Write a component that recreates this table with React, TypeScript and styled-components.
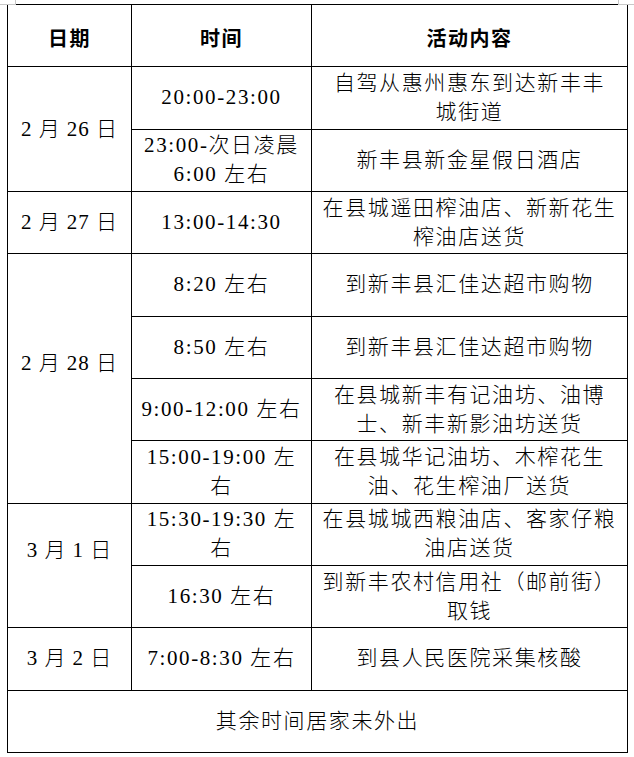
import styled, { createGlobalStyle } from "styled-components";

const GlobalStyle = createGlobalStyle`
  html, body {
    margin: 0;
    padding: 0;
    background: #ffffff;
  }
`;

interface Entry {
  time: string[];
  content: string[];
}

interface DayGroup {
  date: string;
  // the source doc leaves an empty paragraph under some dates, which pushes them up
  raised?: boolean;
  entries: Entry[];
}

const schedule: DayGroup[] = [
  {
    date: "2 月 26 日",
    entries: [
      { time: ["20:00-23:00"], content: ["自驾从惠州惠东到达新丰丰", "城街道"] },
      { time: ["23:00-次日凌晨", "6:00 左右"], content: ["新丰县新金星假日酒店"] },
    ],
  },
  {
    date: "2 月 27 日",
    entries: [
      { time: ["13:00-14:30"], content: ["在县城遥田榨油店、新新花生", "榨油店送货"] },
    ],
  },
  {
    date: "2 月 28 日",
    raised: true,
    entries: [
      { time: ["8:20 左右"], content: ["到新丰县汇佳达超市购物"] },
      { time: ["8:50 左右"], content: ["到新丰县汇佳达超市购物"] },
      { time: ["9:00-12:00 左右"], content: ["在县城新丰有记油坊、油博", "士、新丰新影油坊送货"] },
      { time: ["15:00-19:00 左", "右"], content: ["在县城华记油坊、木榨花生", "油、花生榨油厂送货"] },
    ],
  },
  {
    date: "3 月 1 日",
    raised: true,
    entries: [
      { time: ["15:30-19:30 左", "右"], content: ["在县城城西粮油店、客家仔粮", "油店送货"] },
      { time: ["16:30 左右"], content: ["到新丰农村信用社（邮前街）", "取钱"] },
    ],
  },
  {
    date: "3 月 2 日",
    entries: [{ time: ["7:00-8:30 左右"], content: ["到县人民医院采集核酸"] }],
  },
];

function Lines({ lines }: { lines: string[] }) {
  return (
    <>
      {lines.map((line, i) => (
        <Line key={i}>{line}</Line>
      ))}
    </>
  );
}

export default function App() {
  return (
    <>
      <GlobalStyle />
      <Page>
        <CornerMark $side="left" />
        <CornerMark $side="right" />
        <Table>
          <colgroup>
            <col style={{ width: 124 }} />
            <col style={{ width: 180 }} />
            <col style={{ width: 316 }} />
          </colgroup>
          <thead>
            <Row>
              <HeadCell>日期</HeadCell>
              <HeadCell>时间</HeadCell>
              <HeadCell>活动内容</HeadCell>
            </Row>
          </thead>
          <tbody>
            {schedule.map((group) =>
              group.entries.map((entry, index) => (
                <Row key={group.date + index}>
                  {index === 0 && (
                    <DateCell rowSpan={group.entries.length} $raised={group.raised}>
                      {group.date}
                    </DateCell>
                  )}
                  <Cell>
                    <Lines lines={entry.time} />
                  </Cell>
                  <Cell>
                    <Lines lines={entry.content} />
                  </Cell>
                </Row>
              ))
            )}
            <Row>
              <Cell colSpan={3}>其余时间居家未外出</Cell>
            </Row>
          </tbody>
        </Table>
      </Page>
    </>
  );
}

const Page = styled.div`
  position: relative;
  width: 634px;
  height: 757px;
  padding: 4px 0 0 7px;
  box-sizing: border-box;
`;

const CornerMark = styled.div<{ $side: "left" | "right" }>`
  position: absolute;
  top: 0;
  ${(p) => (p.$side === "left" ? "left: 0;" : "right: 0;")}
  width: 15px;
  height: 4px;
  ${(p) =>
    p.$side === "left"
      ? "border-right: 1px solid #c8c8c8; border-bottom: 1px solid #c8c8c8;"
      : "border-left: 1px solid #c8c8c8; border-bottom: 1px solid #c8c8c8;"}
`;

const Table = styled.table`
  width: 620px;
  border-collapse: collapse;
  table-layout: fixed;
  color: #000000;
`;

const Row = styled.tr`
  height: 62.33px;
`;

const HeadCell = styled.th`
  border: 1px solid #000000;
  padding: 4px 0 0;
  text-align: center;
  vertical-align: middle;
  font-family: "Noto Sans CJK SC", sans-serif;
  font-size: 20px;
  font-weight: 700;
  letter-spacing: 1.5px;
`;

const Cell = styled.td`
  border: 1px solid #000000;
  padding: 0 4px;
  text-align: center;
  vertical-align: middle;
  font-family: "Liberation Serif", "Noto Sans CJK SC", serif;
  font-size: 21px;
  font-weight: 300;
  line-height: 29px;
  letter-spacing: 1.6px;
  white-space: nowrap;
`;

const DateCell = styled(Cell)<{ $raised?: boolean }>`
  letter-spacing: 1px;
  padding-bottom: ${(p) => (p.$raised ? "29px" : "0")};
`;

const Line = styled.div`
  display: block;
`;
